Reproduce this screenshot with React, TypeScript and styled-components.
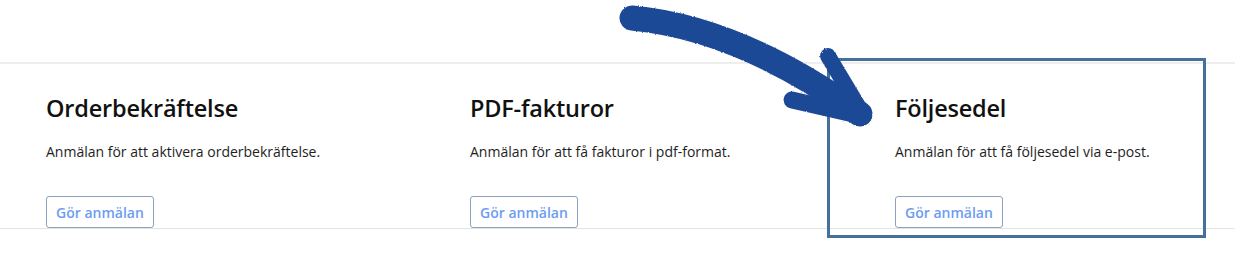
import React from "react";
import styled, { createGlobalStyle } from "styled-components";

const Global = createGlobalStyle`
  html, body { margin: 0; padding: 0; background: #ffffff; }
  body { font-family: "Open Sans", "Noto Sans", Arial, sans-serif; color: #1a1a1a; }
`;

const Page = styled.div`
  position: relative;
  width: 1235px;
  height: 267px;
  overflow: hidden;
  background: #fff;
  padding-top: 62px;
  box-sizing: border-box;
`;

const Section = styled.section`
  display: grid;
  grid-template-columns: 424px 425px 1fr;
  padding-left: 46px;
  border-top: 2px solid #eeeeee;
  border-bottom: 1px solid #e4e4e4;
  height: 167px;
  box-sizing: border-box;
`;

const Card = styled.div`
  display: flex;
  flex-direction: column;
  align-items: flex-start;
  padding-top: 29px;
`;

const Title = styled.h2`
  margin: 0;
  font-size: 23.5px;
  font-weight: 600;
  line-height: 30px;
  color: #111;
  letter-spacing: -0.2px;
`;

const Desc = styled.p`
  margin: 19px 0 0;
  font-size: 14px;
  line-height: 20px;
  color: #1e1e1e;
`;

const Button = styled.button`
  margin-top: auto;
  height: 32px;
  padding: 0 9px;
  border: 1px solid #8da2c2;
  border-radius: 3px;
  background: #fff;
  color: #6d9cf2;
  font-family: inherit;
  font-size: 14px;
  font-weight: 600;
  cursor: pointer;
`;

const Highlight = styled.div`
  position: absolute;
  left: 827px;
  top: 58px;
  width: 379px;
  height: 180px;
  border: 3.5px solid #44709c;
  box-sizing: border-box;
  pointer-events: none;
`;

const Overlay = styled.svg`
  position: absolute;
  left: 0;
  top: 0;
  pointer-events: none;
`;

const cards = [
  { title: "Orderbekräftelse", desc: "Anmälan för att aktivera orderbekräftelse." },
  { title: "PDF-fakturor", desc: "Anmälan för att få fakturor i pdf-format." },
  { title: "Följesedel", desc: "Anmälan för att få följesedel via e-post." },
];

export default function App() {
  return (
    <Page>
      <Global />
      <Section>
        {cards.map((c) => (
          <Card key={c.title}>
            <Title>{c.title}</Title>
            <Desc>{c.desc}</Desc>
            <Button>Gör anmälan</Button>
          </Card>
        ))}
      </Section>
      <Highlight />
      <Overlay width="1235" height="267" viewBox="0 0 1235 267">
        <defs>
          <filter id="brush" filterUnits="userSpaceOnUse" x="0" y="0" width="1235" height="267">
            <feTurbulence type="fractalNoise" baseFrequency="0.9" numOctaves="2" result="n" />
            <feDisplacementMap in="SourceGraphic" in2="n" scale="2.5" />
          </filter>
        </defs>
        <g filter="url(#brush)" stroke="#1f4a96" fill="none" strokeLinecap="round">
          <path d="M 632 18 Q 740 28 860 114" strokeWidth="25" />
          <path d="M 828 56 L 864 116" strokeWidth="16" />
          <path d="M 792 100 L 862 116" strokeWidth="17" />
        </g>
      </Overlay>
    </Page>
  );
}
